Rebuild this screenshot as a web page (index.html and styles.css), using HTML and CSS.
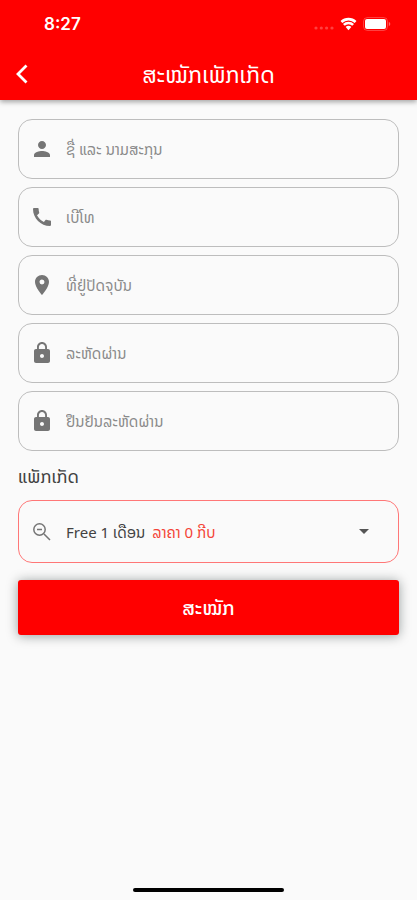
FILE: index.html
```html
<!DOCTYPE html>
<html lang="lo">
<head>
<meta charset="utf-8">
<meta name="viewport" content="width=device-width, initial-scale=1">
<title>ສະໝັກແພັກເກັດ</title>
<link rel="stylesheet" href="styles.css">
</head>
<body>
<div class="screen">
  <header class="header">
    <div class="status">
      <span class="time">8:27</span>
      <span class="indicators">
        <svg class="signal" viewBox="0 0 20 4" aria-hidden="true"><circle cx="2" cy="2" r="1.6"/><circle cx="7.3" cy="2" r="1.6"/><circle cx="12.6" cy="2" r="1.6"/><circle cx="18" cy="2" r="1.6"/></svg>
        <svg class="wifi" viewBox="0 0 18 14" aria-hidden="true"><path d="M9 13.500 6 10.200a4.200 4.200 0 0 1 6 0z" fill="#fff"/><path d="M4.100 8a6.900 6.900 0 0 1 9.800 0M1.500 4.900a10.700 10.700 0 0 1 15 0" fill="none" stroke="#fff" stroke-width="2.700"/></svg>
        <svg class="battery" viewBox="0 0 28 14" aria-hidden="true"><rect x=".5" y=".5" width="24" height="13" rx="4" fill="none" stroke="#fff" stroke-opacity=".25"/><rect x="2" y="2" width="21" height="10" rx="2" fill="#fff"/><path d="M25.800 4.800c2 .8 2 3.600 0 4.400z" fill="#fff" fill-opacity=".4"/></svg>
      </span>
    </div>
    <div class="bar">
      <button class="back" type="button" aria-label="ກັບຄືນ"><svg viewBox="0 0 12 20" aria-hidden="true"><path d="M10.500 1.500 2 10l8.500 8.500" fill="none" stroke="#fff" stroke-width="2.800"/></svg></button>
      <h1 class="title">ສະໝັກເພັກເກັດ</h1>
    </div>
  </header>
  <main class="content">
    <form class="form">
      <div class="fields">
        <label class="field">
          <svg class="icon" viewBox="0 0 24 24" aria-hidden="true"><path d="M12 12c2.21 0 4-1.79 4-4s-1.790-4-4-4-4 1.790-4 4 1.790 4 4 4zm0 2c-2.670 0-8 1.340-8 4v2h16v-2c0-2.660-5.330-4-8-4z"/></svg>
          <input class="input" type="text" aria-label="ຊື່ ແລະ ນາມສະກຸນ" placeholder="ຊື່ ແລະ ນາມສະກຸນ">
        </label>
        <label class="field">
          <svg class="icon" viewBox="0 0 24 24" aria-hidden="true"><path d="M20.010 15.380c-1.230 0-2.420-.2-3.530-.560-.350-.120-.740-.030-1.010.240l-1.570 1.970c-2.830-1.350-5.480-3.900-6.890-6.830l1.950-1.660c.27-.28.35-.67.24-1.020-.37-1.110-.56-2.300-.56-3.530 0-.54-.45-.99-.99-.99H4.190C3.650 3 3 3.240 3 3.990 3 13.280 10.730 21 20.010 21c.71 0 .99-.63.99-1.180v-3.450c0-.54-.45-.99-.99-.99z"/></svg>
          <input class="input" type="tel" aria-label="ເບີໂທ" placeholder="ເບີໂທ">
        </label>
        <label class="field">
          <svg class="icon" viewBox="0 0 24 24" aria-hidden="true"><path d="M12 2C8.130 2 5 5.130 5 9c0 5.250 7 13 7 13s7-7.750 7-13c0-3.870-3.130-7-7-7zm0 9.500a2.500 2.500 0 0 1 0-5 2.500 2.500 0 0 1 0 5z"/></svg>
          <input class="input" type="text" aria-label="ທີ່ຢູ່ປັດຈຸບັນ" placeholder="ທີ່ຢູ່ປັດຈຸບັນ">
        </label>
        <label class="field">
          <svg class="icon" viewBox="0 0 24 24" aria-hidden="true"><path d="M18 8h-1V6c0-2.760-2.240-5-5-5S7 3.240 7 6v2H6c-1.100 0-2 .9-2 2v10c0 1.100.9 2 2 2h12c1.100 0 2-.9 2-2V10c0-1.100-.9-2-2-2zm-6 9c-1.100 0-2-.9-2-2s.9-2 2-2 2 .9 2 2-.9 2-2 2zm3.100-9H8.900V6c0-1.710 1.390-3.100 3.100-3.100s3.100 1.390 3.100 3.100v2z"/></svg>
          <input class="input" type="password" aria-label="ລະຫັດຜ່ານ" placeholder="ລະຫັດຜ່ານ">
        </label>
        <label class="field">
          <svg class="icon" viewBox="0 0 24 24" aria-hidden="true"><path d="M18 8h-1V6c0-2.760-2.240-5-5-5S7 3.240 7 6v2H6c-1.100 0-2 .9-2 2v10c0 1.100.9 2 2 2h12c1.100 0 2-.9 2-2V10c0-1.100-.9-2-2-2zm-6 9c-1.100 0-2-.9-2-2s.9-2 2-2 2 .9 2 2-.9 2-2 2zm3.100-9H8.900V6c0-1.710 1.390-3.100 3.100-3.100s3.100 1.390 3.100 3.100v2z"/></svg>
          <input class="input" type="password" aria-label="ຢືນຢັນລະຫັດຜ່ານ" placeholder="ຢືນຢັນລະຫັດຜ່ານ">
        </label>
      </div>
      <label class="caption" for="package">ແພັກເກັດ</label>
      <div class="field package">
        <svg class="icon icon-line" viewBox="0 0 24 24" aria-hidden="true"><circle cx="9.500" cy="9.500" r="5.700"/><path d="m14 14 6 6M7 9.500h5"/></svg>
        <select class="select" id="package"><option>Free 1 ເດືອນ</option></select>
        <output class="price" for="package">ລາຄາ 0 ກີບ</output>
        <svg class="arrow" viewBox="0 0 10 5" aria-hidden="true"><path d="M0 0h10L5 5z"/></svg>
      </div>
      <button class="submit" type="submit">ສະໝັກ</button>
    </form>
  </main>
  <footer class="home"><div class="home-bar"></div></footer>
</div>
</body>
</html>
```
FILE: styles.css
```css
* { box-sizing: border-box; }
body {
  margin: 0;
  background: #fafafa;
  color: #424242;
  font-family: "Noto Sans", "Noto Sans Lao", "DejaVu Sans", sans-serif;
}
button, input, select { font: inherit; }
.screen { min-height: 100vh; display: flex; flex-direction: column; }
.header {
  background: #f00;
  color: #fff;
  box-shadow: 0 2px 5px rgba(0, 0, 0, .35);
}
.status {
  display: flex;
  align-items: center;
  justify-content: space-between;
  height: 48px;
  padding: 0 26px 0 44px;
}
.time { font: 600 17px/24px Inter, sans-serif; }
.indicators { display: flex; align-items: center; gap: 6px; }
.signal { width: 20px; height: 4px; margin-top: 8px; fill: #fff; fill-opacity: .25; }
.wifi { width: 17px; height: 14px; }
.battery { width: 28px; height: 14px; }
.bar {
  display: grid;
  grid-template-columns: 44px 1fr 44px;
  align-items: center;
  height: 52px;
}
.back { display: flex; padding: 0 16px; border: 0; background: none; }
.back svg { width: 12px; height: 20px; }
.title { margin: 0; font-size: 23px; line-height: 32px; font-weight: 400; text-align: center; }
.content { flex: 1; padding: 19px 18px; }
.form { display: flex; flex-direction: column; }
.fields { display: flex; flex-direction: column; gap: 8px; }
.field {
  display: flex;
  align-items: center;
  height: 60px;
  padding: 0 11px;
  border: 1px solid #bdbdbd;
  border-radius: 14px;
}
.icon { flex: none; width: 24px; height: 24px; margin-right: 12px; fill: #757575; }
.icon-line { fill: none; stroke: #757575; stroke-width: 1.5px; }
.input {
  flex: 1;
  min-width: 0;
  padding: 0;
  border: 0;
  outline: 0;
  background: none;
  font-size: 15px;
  line-height: 24px;
}
.input::placeholder { color: #8a8a8a; opacity: 1; }
.caption { margin: 13px 0 12px; font-size: 18px; line-height: 24px; }
.package { height: 63px; border-color: #f77; font-size: 15px; line-height: 24px; }
.select {
  appearance: none;
  field-sizing: content;
  padding: 0;
  border: 0;
  background: none;
  color: inherit;
}
.price { margin-left: 7px; color: #f44336; }
.arrow { width: 10px; height: 5px; margin: 0 18px 0 auto; fill: #555; }
.submit {
  height: 55px;
  margin-top: 17px;
  border: 0;
  border-radius: 3px;
  background: #f00;
  color: #fff;
  font-size: 20px;
  font-weight: 500;
  box-shadow: 0 1px 12px rgba(0, 20, 20, .4);
}
.home { display: flex; justify-content: center; padding-bottom: 8px; }
.home-bar { width: 36%; height: 4px; border-radius: 2px; background: #000; }
```
